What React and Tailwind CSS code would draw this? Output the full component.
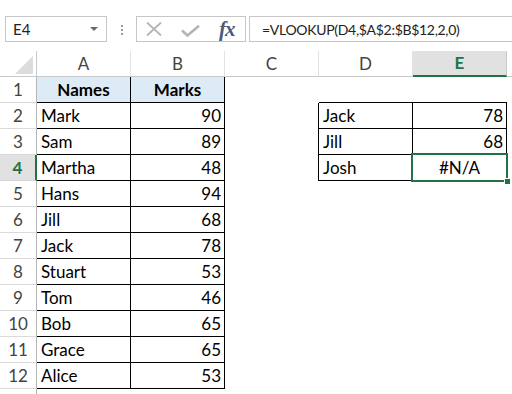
const rows = [
  { a: 'Names', b: 'Marks', head: true },
  { a: 'Mark', b: 90, d: 'Jack', e: 78 },
  { a: 'Sam', b: 89, d: 'Jill', e: 68 },
  { a: 'Martha', b: 48, d: 'Josh', e: '#N/A', active: true },
  { a: 'Hans', b: 94 },
  { a: 'Jill', b: 68 },
  { a: 'Jack', b: 78 },
  { a: 'Stuart', b: 53 },
  { a: 'Tom', b: 46 },
  { a: 'Bob', b: 65 },
  { a: 'Grace', b: 65 },
  { a: 'Alice', b: 53 },
]

function FormulaBar() {
  return (
    <div className="h-[51px] flex items-start pt-[16px] pl-[5px]">
      <div className="w-[102px] h-[26px] border border-[#c6c6c6] flex items-center justify-between pl-[7px] pr-[8px] text-[15px] text-[#222]">
        <span>E4</span>
        <span className="w-0 h-0 border-l-[4px] border-r-[4px] border-t-[4px] border-l-transparent border-r-transparent border-t-[#6b6b6b]"></span>
      </div>
      <div className="ml-[14px] mt-[9px] flex flex-col gap-[2px]">
        <span className="w-[2px] h-[2px] bg-[#9a9a9a]"></span>
        <span className="w-[2px] h-[2px] bg-[#9a9a9a]"></span>
        <span className="w-[2px] h-[2px] bg-[#9a9a9a]"></span>
      </div>
      <div className="ml-[13px] w-[110px] h-[26px] border border-[#c6c6c6] flex items-center">
        <svg width="16" height="14" viewBox="0 0 16 14" className="ml-[9px]">
          <path d="M1 0.5 L15 13.5 M15 0.5 L1 13.5" stroke="#b4b4b4" strokeWidth="1.8" fill="none" />
        </svg>
        <svg width="19" height="12" viewBox="0 0 19 12" className="ml-[19px] mt-[4px]">
          <path d="M1 5.5 L6.5 10.5 L18 0.8" stroke="#b4b4b4" strokeWidth="2.6" fill="none" />
        </svg>
        <span className="ml-[19px] font-['Liberation_Serif',serif] italic font-bold text-[21px] leading-none text-[#4d5b7a] tracking-[-1px]">fx</span>
      </div>
      <div className="ml-[3px] flex-1 h-[26px] border border-r-0 border-[#c6c6c6] flex items-center pl-[12px] text-[14px] tracking-[-0.3px] text-[#222]">
        =VLOOKUP(D4,$A$2:$B$12,2,0)
      </div>
    </div>
  )
}

function ColumnHeaders() {
  const cols = ['A', 'B', 'C', 'D']
  return (
    <div className="flex h-[26px]">
      <div className="w-[37px] h-[26px] border-r border-b border-[#c8c8c8] flex items-end justify-end pr-[3px] pb-[2px]">
        <svg width="18" height="18" viewBox="0 0 18 18">
          <path d="M18 0 L18 18 L0 18 Z" fill="#dcdcdc" />
        </svg>
      </div>
      {cols.map(c => (
        <div key={c} className="w-[94px] h-[26px] border-r border-b border-r-[#e2e2e2] border-b-[#c8c8c8] flex items-center justify-center text-[17px] text-[#444]">
          {c}
        </div>
      ))}
      <div className="w-[94px] h-[26px] bg-[#e1e1e1] border-r border-r-[#c8c8c8] border-b-[2px] border-b-[#217346] flex items-center justify-center text-[17px] font-bold text-[#217346]">
        E
      </div>
      <div className="flex-1 h-[26px] border-b border-[#c8c8c8]"></div>
    </div>
  )
}

function Row({ n, r }) {
  const showLookup = n <= 4
  return (
    <div className="flex h-[26px]">
      {r.active ? (
        <div className="w-[37px] h-[26px] bg-[#e1e1e1] border-r-[2px] border-r-[#217346] border-b border-b-[#d4d4d4] flex items-center justify-center text-[17px] font-bold text-[#217346]">
          {n}
        </div>
      ) : (
        <div className="w-[37px] h-[26px] border-r border-r-[#b5b5b5] border-b border-b-[#dadada] flex items-center justify-center text-[17px] text-[#444]">
          {n}
        </div>
      )}
      {r.head ? (
        <>
          <div className="w-[94px] h-[26px] bg-[#ddebf7] border-r border-b border-black flex items-center justify-center text-[17px] font-bold text-black">{r.a}</div>
          <div className="w-[94px] h-[26px] bg-[#ddebf7] border-r border-b border-black flex items-center justify-center text-[17px] font-bold text-black">{r.b}</div>
        </>
      ) : (
        <>
          <div className="w-[94px] h-[26px] border-r border-b border-black flex items-center pl-[4px] text-[17px] text-black">{r.a}</div>
          <div className="w-[94px] h-[26px] border-r border-b border-black flex items-center justify-end pr-[3px] text-[17px] text-black">{r.b}</div>
        </>
      )}
      {showLookup && n > 1 ? (
        <div className="w-[94px] h-[26px] border-r border-black"></div>
      ) : (
        <div className="w-[94px] h-[26px]"></div>
      )}
      {showLookup ? (
        n === 1 ? (
          <>
            <div className="w-[94px] h-[26px] border-b border-black"></div>
            <div className="w-[94px] h-[26px] border-b border-black"></div>
          </>
        ) : (
          <>
            <div className="w-[94px] h-[26px] border-r border-b border-black flex items-center pl-[4px] text-[17px] text-black">{r.d}</div>
            {r.active ? (
              <div className="w-[94px] h-[26px] border-r border-b border-black flex items-center justify-center text-[17px] text-black relative z-10">
                {r.e}
                <span className="absolute -left-[2px] -top-[2px] w-[97px] h-[29px] border-2 border-[#217346]"></span>
                <span className="absolute -right-[5px] -bottom-[5px] w-[7px] h-[7px] bg-[#217346] border border-white"></span>
              </div>
            ) : (
              <div className="w-[94px] h-[26px] border-r border-b border-black flex items-center justify-end pr-[3px] text-[17px] text-black">{r.e}</div>
            )}
          </>
        )
      ) : (
        <>
          <div className="w-[94px] h-[26px]"></div>
          <div className="w-[94px] h-[26px]"></div>
        </>
      )}
    </div>
  )
}

export default function App() {
  return (
    <div className="w-[512px] h-[394px] bg-white overflow-hidden font-['Lato',sans-serif]">
      <FormulaBar />
      <ColumnHeaders />
      {rows.map((r, i) => (
        <Row key={i} n={i + 1} r={r} />
      ))}
      <div className="flex h-[26px]">
        <div className="w-[37px] h-[26px] border-r border-r-[#b5b5b5]"></div>
      </div>
    </div>
  )
}
